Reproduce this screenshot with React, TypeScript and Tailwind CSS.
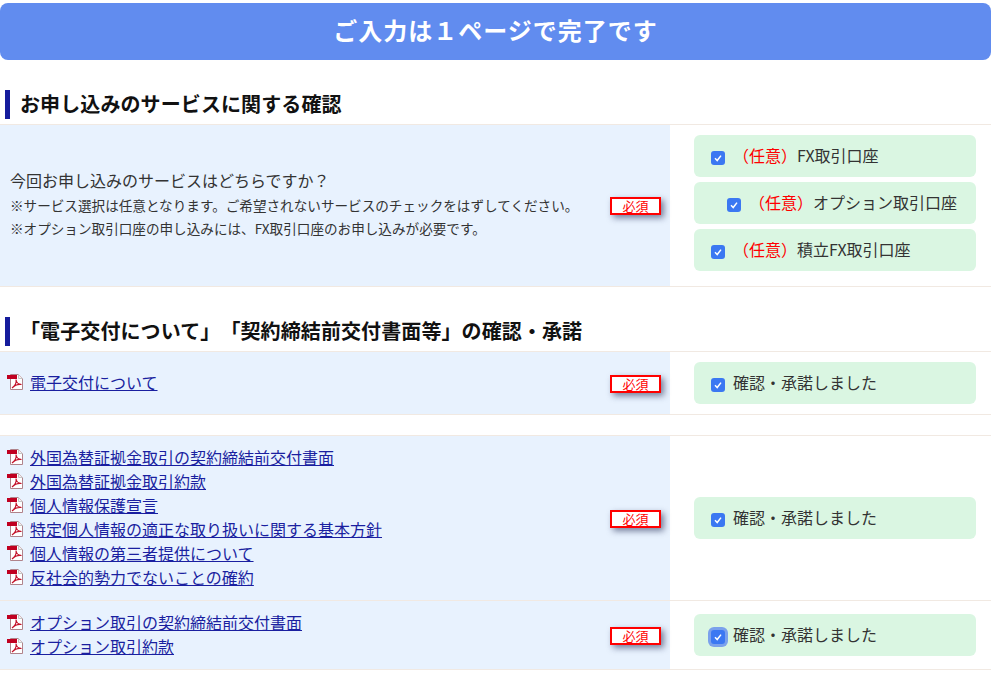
import React from "react";

function Pdf() {
  return (
    <svg width="16" height="16" viewBox="0 0 16 16" className="block shrink-0">
      <path d="M3.5 .5H11.5L15.5 4.5V15.5H3.5Z" fill="#fff" stroke="#b0838b" />
      <path d="M11.5 .5V4.5H15.5" fill="#f1f1f1" stroke="#c4c4c4" />
      <rect x="0" y="1" width="10" height="4" fill="#c00020" />
      <path d="M5 14C8 12 9.5 8.5 9 5.5C9.5 8.5 11 10.5 14.5 10.5C11 10 8 11 5 14Z" fill="none" stroke="#c4142c" strokeWidth="1.1" />
    </svg>
  );
}
function Check({ focus }: { focus?: boolean }) {
  return (
    <span className={`w-[14px] h-[14px] shrink-0 rounded-[3px] bg-[#3b78f2] flex items-center justify-center ${focus ? "shadow-[0_0_0_3px_#7ba1ec]" : ""}`}>
      <svg width="10" height="10" viewBox="0 0 10 10"><path d="M2 5.3L4.2 7.5L8 2.6" fill="none" stroke="#fff" strokeWidth="1.5" /></svg>
    </span>
  );
}
function Req() {
  return (
    <div className="absolute left-[610px] top-1/2 -translate-y-1/2 mt-[0.5px] w-[51px] h-[18px] border-[2px] border-[#ff0000] bg-white text-[#ff0000] text-[13px] leading-[13px] text-center shadow-[3px_3px_6px_rgba(40,50,90,0.6)]">必須</div>
  );
}
function Box({ children, indent, focus }: { children: React.ReactNode; indent?: boolean; focus?: boolean }) {
  return (
    <div className={`h-[42px] w-[282px] rounded-[6px] bg-[#daf6e2] flex items-center text-[16px] text-[#333] ${indent ? "pl-[33px]" : "pl-[17px]"}`}>
      <span className="mt-[4px]"><Check focus={focus} /></span>
      {children}
    </div>
  );
}
const Opt = () => <span className="text-[#ff0000]">（任意）</span>;
function Row({ left, right, h, pad }: { left: React.ReactNode; right: React.ReactNode; h: string; pad?: string }) {
  return (
    <div className={`relative flex border-b border-[#f1e9e2] ${h}`}>
      <div className="w-[670px] bg-[#e8f2fe] shrink-0 flex flex-col justify-center">{left}</div>
      <Req />
      <div className={`flex-1 pl-[24px] flex flex-col justify-center gap-[5px] ${pad ?? ""}`}>{right}</div>
    </div>
  );
}
function Heading({ children, cls }: { children: React.ReactNode; cls: string }) {
  return (
    <div className={`flex items-center ml-[5px] border-l-[5px] border-[#151c9c] h-[29px] pl-[10px] pb-[1px] text-[20px] font-bold text-[#111] tracking-[0.1px] [text-spacing-trim:space-all] ${cls}`}>{children}</div>
  );
}
function Link({ t }: { t: string }) {
  return (
    <div className="flex h-[24px] items-center pl-[7px]">
      <span className="-mt-[3px]"><Pdf /></span>
      <a className="ml-[7px] pb-[2px] text-[16px] leading-[22px] text-[#1a1fa0] underline">{t}</a>
    </div>
  );
}
const Confirm = ({ focus }: { focus?: boolean }) => (
  <Box focus={focus}><span className="ml-[8px] pb-[2px]">確認・承諾しました</span></Box>
);

export default function App() {
  return (
    <div className="w-[991px] pt-[3px] bg-white" style={{ fontFamily: '"Noto Sans CJK JP", "Noto Sans", sans-serif' }}>
      <div className="h-[57px] pb-[4px] rounded-[8px] bg-[#618cef] text-white font-bold text-[24px] tracking-[1px] flex items-center justify-center">ご入力は１ページで完了です</div>
      <Heading cls="mt-[30px] mb-[5px]">お申し込みのサービスに関する確認</Heading>
      <div className="border-t border-[#f1e9e2]">
        <Row h="h-[162px]" pad="pb-[5px]"
          left={<div className="pl-[10px] pb-[3px] text-[#333]">
            <div className="text-[16px] leading-[24px] mb-[1px]">今回お申し込みのサービスはどちらですか？</div>
            <div className="text-[13.6px] leading-[24px]">※サービス選択は任意となります。ご希望されないサービスのチェックをはずしてください。</div>
            <div className="text-[13.6px] leading-[23px]">※オプション取引口座の申し込みには、FX取引口座のお申し込みが必要です。</div>
          </div>}
          right={<>
            <Box><span className="ml-[8px] pb-[2px]"><Opt />FX取引口座</span></Box>
            <Box indent><span className="ml-[8px] pb-[2px]"><Opt />オプション取引口座</span></Box>
            <Box><span className="ml-[8px] pb-[2px]"><Opt />積立FX取引口座</span></Box>
          </>}
        />
      </div>
      <Heading cls="mt-[30px] mb-[5px]">「電子交付について」「契約締結前交付書面等」の確認・承諾</Heading>
      <div className="border-t border-[#f1e9e2]">
        <Row h="h-[63px]" left={<Link t="電子交付について" />} right={<Confirm />} />
      </div>
      <div className="h-[20px]" />
      <div className="border-t border-[#f1e9e2]">
        <Row h="h-[165px]"
          left={<div>
            {["外国為替証拠金取引の契約締結前交付書面", "外国為替証拠金取引約款", "個人情報保護宣言", "特定個人情報の適正な取り扱いに関する基本方針", "個人情報の第三者提供について", "反社会的勢力でないことの確約"].map((t) => <Link key={t} t={t} />)}
          </div>}
          right={<Confirm />}
        />
        <Row h="h-[69px]"
          left={<div>{["オプション取引の契約締結前交付書面", "オプション取引約款"].map((t) => <Link key={t} t={t} />)}</div>}
          right={<Confirm focus />}
        />
      </div>
    </div>
  );
}
